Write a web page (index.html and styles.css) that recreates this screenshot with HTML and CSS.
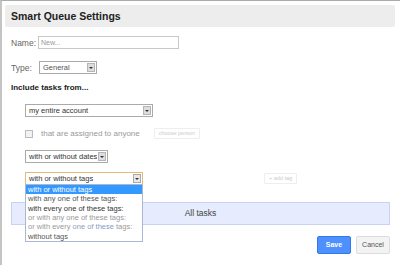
FILE: index.html
```html
<html>
<head>
  <meta charset="utf-8">
  <title>Smart Queue Settings</title>
  <link rel="stylesheet" href="styles.css">
</head>
<body>
  <div id="frame">
    <div class="header">Smart Queue Settings</div>

    <div class="row name-row">
      <span class="label">Name:</span>
      <div class="text-input">New...</div>
    </div>

    <div class="row type-row">
      <span class="label">Type:</span>
      <div class="select type-select"><span class="value">General</span><span class="arrow"></span></div>
    </div>

    <div class="section-title">Include tasks from...</div>

    <div class="indent">
      <div class="select account-select"><span class="value">my entire account</span><span class="arrow"></span></div>

      <div class="row assign-row">
        <span class="checkbox"></span>
        <span class="muted">that are assigned to anyone</span>
        <span class="ghost-btn person-btn">choose person</span>
      </div>

      <div class="select dates-select"><span class="value">with or without dates</span><span class="arrow"></span></div>

      <div class="row tags-row">
        <div class="tags-wrap">
          <div class="select tags-select focused"><span class="value">with or without tags</span><span class="arrow"></span></div>
          <ul class="dropdown">
            <li class="selected">with or without tags</li>
            <li>with any one of these tags:</li>
            <li class="dark">with every one of these tags:</li>
            <li class="dim">or with any one of these tags:</li>
            <li class="dim">or with every <span class="hint">one of these</span> tags:</li>
            <li>without tags</li>
          </ul>
        </div>
        <span class="ghost-btn tag-btn">+ add tag</span>
      </div>
    </div>

    <div class="summary">All tasks</div>

    <div class="actions">
      <span class="btn save">Save</span>
      <span class="btn cancel">Cancel</span>
    </div>
  </div>
</body>
</html>
```

FILE: styles.css
```css
body {
  margin: 0;
  font-family: 'Liberation Sans', Arial, sans-serif;
  font-size: 8px;
  color: #444;
  background-color: #fff;
}

#frame {
  height: 262px;
  border-top: 1px solid #aaa;
  border-left: 2px solid #c4c4c4;
  border-bottom: 1px solid #ccc;
  padding: 4px 5px 0 3px;
}

.header {
  height: 22px;
  line-height: 22px;
  padding-left: 6px;
  font-size: 10.5px;
  font-weight: bold;
  color: #222;
  background-color: #ededed;
  border-radius: 2px;
}

.row {
  display: flex;
  align-items: center;
}

.label {
  color: #666;
  font-size: 8.5px;
}

.name-row {
  margin: 9px 0 0 6px;
}

.name-row .label {
  width: 27px;
}

.text-input {
  width: 137px;
  height: 11px;
  line-height: 11px;
  padding-left: 2px;
  border: 1px solid #c8c8c8;
  color: #999;
  font-size: 7px;
}

.type-row {
  margin: 12px 0 0 6px;
}

.type-row .label {
  width: 28px;
}

.select {
  display: flex;
  height: 11px;
  border: 1px solid #aaa;
  background-color: #fff;
  font-size: 7.5px;
  color: #333;
}

.select .value {
  flex: 1;
  line-height: 11px;
  padding-left: 3px;
  white-space: nowrap;
  overflow: hidden;
}

.select .arrow {
  width: 8px;
  margin: 1px;
  background-color: #ddd;
  border: 1px solid #b5b5b5;
  box-sizing: border-box;
  position: relative;
}

.select .arrow::after {
  content: '';
  position: absolute;
  left: 1px;
  top: 3px;
  border-left: 2px solid transparent;
  border-right: 2px solid transparent;
  border-top: 2px solid #333;
}

.type-select {
  width: 56px;
  color: #555;
}

.section-title {
  margin: 9px 0 0 6px;
  font-weight: bold;
  font-size: 8px;
  color: #222;
}

.indent {
  padding-left: 20px;
}

.account-select {
  width: 126px;
  margin-top: 12px;
}

.assign-row {
  margin-top: 11px;
  height: 11px;
}

.checkbox {
  width: 6px;
  height: 6px;
  border: 1px solid #bbb;
  background-color: #f2f2f2;
  margin-right: 8px;
}

.muted {
  color: #999;
  font-size: 8px;
}

.ghost-btn {
  border: 1px solid #eee;
  border-radius: 1px;
  color: #ccc;
  font-size: 5.5px;
  height: 9px;
  line-height: 9px;
  padding: 0 4px;
}

.person-btn {
  margin-left: 14px;
}

.dates-select {
  width: 81px;
  margin-top: 11px;
}

.tags-row {
  margin-top: 9px;
  align-items: flex-start;
}

.tags-wrap {
  position: relative;
}

.tags-select {
  width: 116px;
}

.focused {
  border-color: #e5b97a;
}

.focused .arrow {
  background-color: #e8e8e8;
  border-color: #aaa;
}

.dropdown {
  position: absolute;
  top: 12px;
  left: 0;
  width: 116px;
  margin: 0;
  padding: 0;
  list-style: none;
  background-color: #fff;
  border: 1px solid #a9b8d0;
  z-index: 2;
}

.dropdown li {
  height: 9.33px;
  line-height: 9px;
  padding-left: 2px;
  font-size: 7.5px;
  color: #555;
  white-space: nowrap;
}

.dropdown li.selected {
  background-color: #3399ff;
  color: #fff;
}

.dropdown li.dark {
  color: #333;
}

.dropdown li.dim {
  color: #999;
}

.dropdown .hint {
  color: #8a9cc0;
}

.tag-btn {
  margin: 1px 0 0 121px;
}

.summary {
  margin: 17px 5px 0 6px;
  height: 21px;
  line-height: 21px;
  text-align: center;
  background-color: #e6ebfd;
  border: 1px solid #c8d2f2;
  color: #444;
  font-size: 8.5px;
}

.actions {
  display: flex;
  justify-content: flex-end;
  margin: 11px 5px 0 0;
}

.btn {
  height: 16px;
  line-height: 16px;
  border-radius: 2px;
  font-size: 7px;
  text-align: center;
  margin-left: 5px;
}

.save {
  width: 32px;
  background-color: #4d90fe;
  border: 1px solid #3079ed;
  color: #fff;
  font-weight: bold;
}

.cancel {
  width: 32px;
  background-color: #f3f3f3;
  border: 1px solid #ddd;
  color: #555;
}
```
